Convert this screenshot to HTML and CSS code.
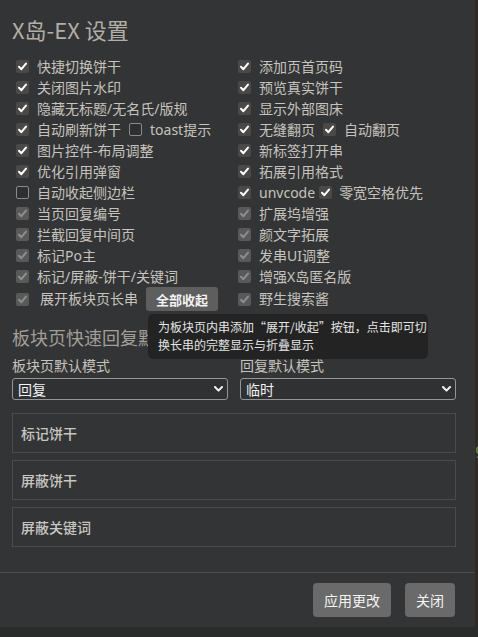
FILE: index.html
```html
<!DOCTYPE html>
<html lang="zh">
<head>
<meta charset="utf-8">
<title>X岛-EX 设置</title>
<link rel="stylesheet" href="styles.css">
</head>
<body>
<div class="page">
  <div class="dialog">
    <div class="content">
      <h1 class="title">X岛-EX 设置</h1>
      <div class="options">
        <label class="opt"><span class="cb on"><svg viewBox="0 0 13 13"><polyline points="3,6.8 5.4,9.2 10,3.6"/></svg></span>快捷切换饼干</label>
        <label class="opt"><span class="cb on"><svg viewBox="0 0 13 13"><polyline points="3,6.8 5.4,9.2 10,3.6"/></svg></span>添加页首页码</label>

        <label class="opt"><span class="cb on"><svg viewBox="0 0 13 13"><polyline points="3,6.8 5.4,9.2 10,3.6"/></svg></span>关闭图片水印</label>
        <label class="opt"><span class="cb on"><svg viewBox="0 0 13 13"><polyline points="3,6.8 5.4,9.2 10,3.6"/></svg></span>预览真实饼干</label>

        <label class="opt"><span class="cb on"><svg viewBox="0 0 13 13"><polyline points="3,6.8 5.4,9.2 10,3.6"/></svg></span>隐藏无标题/无名氏/版规</label>
        <label class="opt"><span class="cb on"><svg viewBox="0 0 13 13"><polyline points="3,6.8 5.4,9.2 10,3.6"/></svg></span>显示外部图床</label>

        <div class="opt"><span class="cb on"><svg viewBox="0 0 13 13"><polyline points="3,6.8 5.4,9.2 10,3.6"/></svg></span>自动刷新饼干<span class="cb off sub"></span>toast提示</div>
        <div class="opt"><span class="cb on"><svg viewBox="0 0 13 13"><polyline points="3,6.8 5.4,9.2 10,3.6"/></svg></span>无缝翻页<span class="cb on sub"><svg viewBox="0 0 13 13"><polyline points="3,6.8 5.4,9.2 10,3.6"/></svg></span>自动翻页</div>

        <label class="opt"><span class="cb on"><svg viewBox="0 0 13 13"><polyline points="3,6.8 5.4,9.2 10,3.6"/></svg></span>图片控件-布局调整</label>
        <label class="opt"><span class="cb on"><svg viewBox="0 0 13 13"><polyline points="3,6.8 5.4,9.2 10,3.6"/></svg></span>新标签打开串</label>

        <label class="opt"><span class="cb on"><svg viewBox="0 0 13 13"><polyline points="3,6.8 5.4,9.2 10,3.6"/></svg></span>优化引用弹窗</label>
        <label class="opt"><span class="cb on"><svg viewBox="0 0 13 13"><polyline points="3,6.8 5.4,9.2 10,3.6"/></svg></span>拓展引用格式</label>

        <label class="opt"><span class="cb off"></span>自动收起侧边栏</label>
        <div class="opt"><span class="cb on"><svg viewBox="0 0 13 13"><polyline points="3,6.8 5.4,9.2 10,3.6"/></svg></span>unvcode<span class="cb on sub tight"><svg viewBox="0 0 13 13"><polyline points="3,6.8 5.4,9.2 10,3.6"/></svg></span>零宽空格优先</div>

        <label class="opt"><span class="cb dis"><svg viewBox="0 0 13 13"><polyline points="3,6.8 5.4,9.2 10,3.6"/></svg></span>当页回复编号</label>
        <label class="opt"><span class="cb dis"><svg viewBox="0 0 13 13"><polyline points="3,6.8 5.4,9.2 10,3.6"/></svg></span>扩展坞增强</label>

        <label class="opt"><span class="cb dis"><svg viewBox="0 0 13 13"><polyline points="3,6.8 5.4,9.2 10,3.6"/></svg></span>拦截回复中间页</label>
        <label class="opt"><span class="cb dis"><svg viewBox="0 0 13 13"><polyline points="3,6.8 5.4,9.2 10,3.6"/></svg></span>颜文字拓展</label>

        <label class="opt"><span class="cb dis"><svg viewBox="0 0 13 13"><polyline points="3,6.8 5.4,9.2 10,3.6"/></svg></span>标记Po主</label>
        <label class="opt"><span class="cb dis"><svg viewBox="0 0 13 13"><polyline points="3,6.8 5.4,9.2 10,3.6"/></svg></span>发串UI调整</label>

        <label class="opt"><span class="cb dis"><svg viewBox="0 0 13 13"><polyline points="3,6.8 5.4,9.2 10,3.6"/></svg></span>标记/屏蔽-饼干/关键词</label>
        <label class="opt"><span class="cb dis"><svg viewBox="0 0 13 13"><polyline points="3,6.8 5.4,9.2 10,3.6"/></svg></span>增强X岛匿名版</label>

        <div class="opt last"><span class="cb dis wide"><svg viewBox="0 0 13 13"><polyline points="3,6.8 5.4,9.2 10,3.6"/></svg></span>展开板块页长串<span class="btn-wrap"><button class="small-btn">全部收起</button><span class="tooltip">为板块页内串添加“展开/收起”按钮，点击即可切<br>换长串的完整显示与折叠显示</span></span></div>
        <label class="opt last"><span class="cb dis"><svg viewBox="0 0 13 13"><polyline points="3,6.8 5.4,9.2 10,3.6"/></svg></span>野生搜索酱</label>
      </div>

      <h2 class="section">板块页快速回复默认设置</h2>
      <div class="selects">
        <div class="field">
          <div class="field-label">板块页默认模式</div>
          <div class="select"><span>回复</span><svg class="chev" viewBox="0 0 9 6"><polyline points="1,1 4.5,4.6 8,1"/></svg></div>
        </div>
        <div class="field">
          <div class="field-label">回复默认模式</div>
          <div class="select"><span>临时</span><svg class="chev" viewBox="0 0 9 6"><polyline points="1,1 4.5,4.6 8,1"/></svg></div>
        </div>
      </div>

      <div class="panels">
        <div class="panel">标记饼干</div>
        <div class="panel">屏蔽饼干</div>
        <div class="panel">屏蔽关键词</div>
      </div>
    </div>
    <div class="footer">
      <button class="btn">应用更改</button>
      <button class="btn">关闭</button>
    </div>
  </div>
  <div class="side"><span class="side-num">9</span></div>
</div>
</body>
</html>
```

FILE: styles.css
```css
* { box-sizing: border-box; }
html, body {
  margin: 0;
  padding: 0;
  background: #2a2b2b;
  font-family: "Noto Sans", "Noto Sans CJK SC", sans-serif;
}
.page {
  display: flex;
  width: 478px;
  height: 637px;
  align-items: flex-start;
}
.dialog {
  width: 474px;
  height: 627px;
  background: #333435;
  display: flex;
  flex-direction: column;
}
.content {
  padding: 0 18px 0 12px;
  flex: 1;
}
.title {
  margin: 0;
  padding-top: 14px;
  font-size: 22px;
  line-height: 30px;
  font-weight: 400;
  color: #b2aea7;
  font-family: "Noto Sans CJK SC", sans-serif;
}
.options {
  margin-top: 12px;
  display: grid;
  grid-template-columns: 222px 222px;
  grid-template-rows: repeat(11, 21px) 24px;
}
.opt {
  display: flex;
  align-items: center;
  font-size: 14px;
  color: #c6c3be;
  font-family: "Noto Sans", "Noto Sans CJK SC", sans-serif;
  white-space: nowrap;
  line-height: 21px;
}
.cb {
  width: 13px;
  height: 13px;
  margin: 0 8px 0 4px;
  border-radius: 2px;
  flex: none;
  display: inline-flex;
}
.cb svg {
  width: 13px;
  height: 13px;
  fill: none;
  stroke-width: 2;
  stroke-linecap: round;
  stroke-linejoin: round;
}
.cb.on { background: #4b4947; }
.cb.on svg { stroke: #ffffff; }
.cb.dis { background: #595959; }
.cb.dis svg { stroke: #8e8e8e; }
.cb.off { border: 1px solid #8a8a8a; background: #2e2f30; }
.cb.sub { margin-left: 8px; }
.cb.sub.tight { margin-left: 4px; margin-right: 7px; }
.cb.wide { margin-right: 11px; }
.opt.last { line-height: 24px; }
.btn-wrap {
  position: relative;
  margin-left: 8px;
  display: inline-flex;
}
.small-btn {
  width: 72px;
  height: 24px;
  border: none;
  border-radius: 3px;
  background: #5e5e5e;
  color: #f2f2f2;
  font-size: 13px;
  font-weight: 700;
  font-family: "Noto Sans CJK SC", sans-serif;
  padding: 0;
}
.tooltip {
  position: absolute;
  left: 2px;
  top: 27px;
  width: 280px;
  padding: 4px 10px 5px;
  background: #222322;
  border-radius: 5px;
  color: #e4e4e4;
  font-size: 12px;
  line-height: 18px;
  white-space: nowrap;
  z-index: 5;
  font-family: "Noto Sans CJK SC", sans-serif;
}
.section {
  margin: 13px 0 0;
  font-size: 18px;
  line-height: 26px;
  font-weight: 400;
  color: #a29f99;
  font-family: "Noto Sans CJK SC", sans-serif;
}
.selects {
  margin-top: 5px;
  display: grid;
  grid-template-columns: 216px 216px;
  column-gap: 12px;
}
.field-label {
  font-size: 14px;
  line-height: 20px;
  color: #c6c3be;
  font-family: "Noto Sans CJK SC", sans-serif;
}
.select {
  margin-top: 3px;
  height: 22px;
  border: 1px solid #959595;
  border-radius: 3px;
  background: #303132;
  display: flex;
  align-items: center;
  justify-content: space-between;
  padding: 0 4px 0 5px;
  font-size: 14px;
  color: #f2f2f2;
  font-family: "Noto Sans CJK SC", sans-serif;
}
.chev {
  width: 9px;
  height: 6px;
  fill: none;
  stroke: #f2f2f2;
  stroke-width: 2;
  stroke-linecap: round;
  stroke-linejoin: round;
}
.panels {
  margin-top: 13px;
  display: flex;
  flex-direction: column;
  gap: 7px;
  width: 444px;
}
.panel {
  height: 40px;
  border: 1px solid #4a4b4c;
  padding-left: 8px;
  display: flex;
  align-items: center;
  font-size: 14px;
  color: #c8c6c2;
  font-weight: 500;
  font-family: "Noto Sans CJK SC", sans-serif;
}
.footer {
  border-top: 1px solid #4d4e4f;
  padding: 10px 19px 10px 0;
  display: flex;
  justify-content: flex-end;
  gap: 14px;
}
.btn {
  height: 34px;
  border: none;
  border-radius: 4px;
  background: #6a6a6a;
  color: #f4f4f4;
  font-size: 14px;
  padding: 0 11px;
  font-family: "Noto Sans CJK SC", sans-serif;
}
.side {
  width: 4px;
  height: 627px;
  background: #2f2a26;
  border-left: 1px solid #3d342c;
  overflow: hidden;
  position: relative;
}
.side-num {
  position: absolute;
  left: 0;
  top: 443px;
  color: #6d8a45;
  font-size: 16px;
  line-height: 20px;
  font-family: "DejaVu Sans Mono", monospace;
}
```
